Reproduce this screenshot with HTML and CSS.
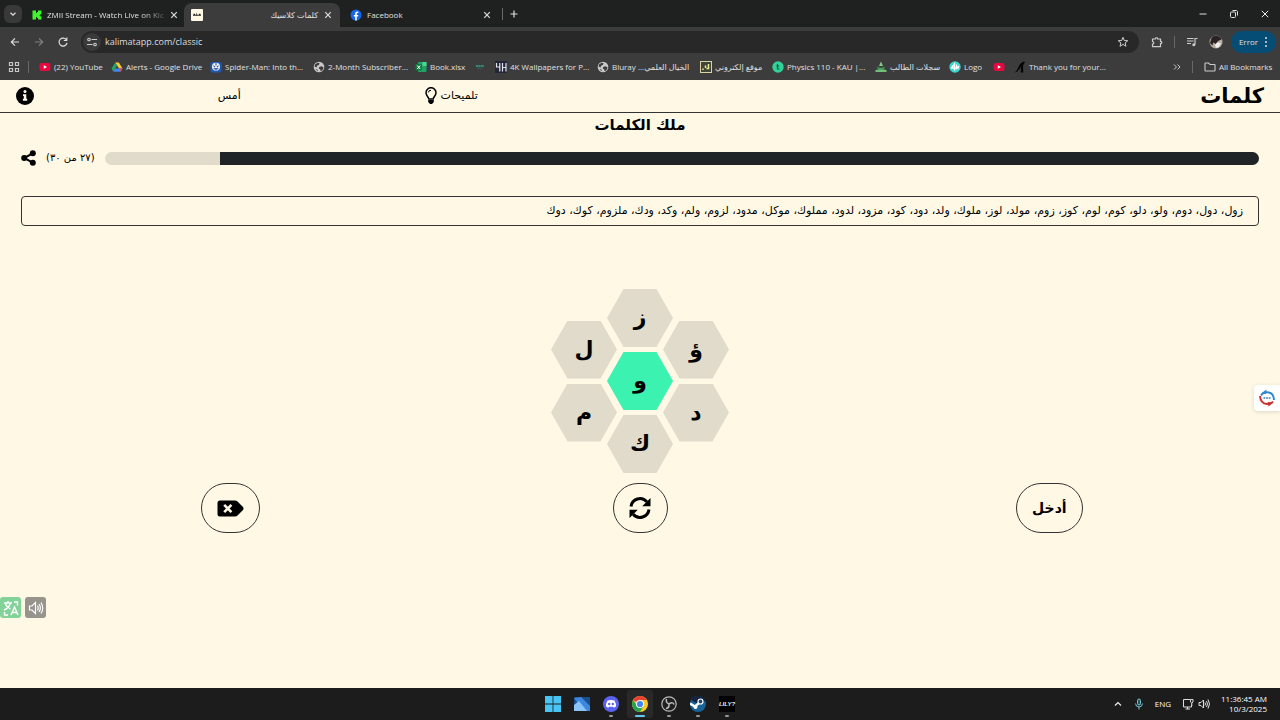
FILE: index.html
```html
<!DOCTYPE html>
<html lang="en">
<head>
<meta charset="utf-8">
<meta name="viewport" content="width=device-width, initial-scale=1">
<title>كلمات كلاسيك</title>
<link rel="stylesheet" href="styles.css">
</head>
<body>
<svg class="defs" aria-hidden="true">
  <symbol id="globe" viewBox="0 0 12 12"><circle cx="6" cy="6" r="5.3" fill="#c8c8c8"/><path d="M2 3.4 4.6 1.7 6.6 2.2 5.8 4 4 4.8 3.6 6.4 1.6 5.6ZM6.2 6 8.6 5.2 10.6 6.6 9.4 9.2 7.6 10.2 7.2 8.2 5.8 7.4ZM2.6 8 4.4 8.4 4.8 10.4" fill="#3c3c3c"/></symbol>
  <symbol id="close" viewBox="0 0 10 10"><path d="M2.200 2.200 7.800 7.800M7.800 2.200 2.200 7.800" stroke="#ddd" stroke-width="1.200"/></symbol>
  <symbol id="youtube" viewBox="0 0 12 12"><rect x=".5" y="2" width="11" height="8" rx="2" fill="#e5093f"/><path d="M4.8 4.2 8 6 4.8 7.8Z" fill="#fff"/></symbol>
</svg>
<div class="desktop">
  <header class="browser">
    <div class="tabstrip">
      <button class="tab-search" aria-label="Search tabs"><svg viewBox="0 0 18 18" width="18" height="18"><path d="M6.5 7.8 9 10.2 11.5 7.8" fill="none" stroke="#ddd" stroke-width="1.3"/></svg></button>
      <div class="tab">
        <svg viewBox="0 0 10 10" width="10" height="10"><path fill="#3ef52a" d="M.5.5H4V3H5V2H6V.5H9.5V4H8.5V5H7.500V5.500H8.500V6.500H9.500V9.500H6V8H5V7H4V9.500H.5Z"/></svg>
        <span class="tab-title faded">ZMII Stream - Watch Live on Kic</span>
        <button class="icon-btn" aria-label="Close tab"><svg width="10" height="10"><use href="#close"/></svg></button>
      </div>
      <div class="tab active">
        <svg viewBox="0 0 12 12" width="12" height="12"><rect width="12" height="12" rx="1" fill="#fff9e5"/><path d="M2 6.200H10M2.500 5.200H4M5 5H6.200M8 5.200H9.500" stroke="#222" stroke-width="1.100"/></svg>
        <span class="tab-title rtl" lang="ar">كلمات كلاسيك</span>
        <button class="icon-btn" aria-label="Close tab"><svg width="10" height="10"><use href="#close"/></svg></button>
      </div>
      <div class="tab">
        <svg viewBox="0 0 12 12" width="12" height="12"><circle cx="6" cy="6" r="5.500" fill="#1668e8"/><path d="M5.200 11.500V7.500H3.800V5.900H5.200V4.800C5.200 3.300 6 2.600 7.300 2.600L8.300 2.700V4H7.600C7 4 6.800 4.400 6.800 4.900V5.900H8.300L8 7.500H6.800V11.500Z" fill="#fff"/></svg>
        <span class="tab-title">Facebook</span>
        <button class="icon-btn" aria-label="Close tab"><svg width="10" height="10"><use href="#close"/></svg></button>
      </div>
      <span class="rule"></span>
      <button class="icon-btn new-tab" aria-label="New tab"><svg viewBox="0 0 10 10" width="10" height="10"><path d="M5 1.500V8.500M1.500 5H8.500" stroke="#ddd" stroke-width="1.200"/></svg></button>
      <div class="window-controls">
        <button class="icon-btn" aria-label="Minimize"><svg viewBox="0 0 10 10" width="10" height="10"><path d="M1.500 5H8.500" stroke="#ddd"/></svg></button>
        <button class="icon-btn" aria-label="Restore"><svg viewBox="0 0 10 10" width="10" height="10"><g fill="none" stroke="#ddd"><rect x="1.500" y="3" width="5" height="5.500" rx="1"/><path d="M3.500 1.500H7C8 1.500 8.500 2 8.500 3V6.500"/></g></svg></button>
        <button class="icon-btn" aria-label="Close"><svg viewBox="0 0 10 10" width="10" height="10"><path d="M1.800 1.800 8.200 8.200M8.200 1.800 1.800 8.200" stroke="#eee"/></svg></button>
      </div>
    </div>
    <div class="toolbar">
      <button class="icon-btn" aria-label="Back"><svg viewBox="0 0 12 12" width="12" height="12"><path d="M10 6H2.500M6 2.300 2.300 6 6 9.700" fill="none" stroke="#ddd" stroke-width="1.200"/></svg></button>
      <button class="icon-btn" aria-label="Forward"><svg viewBox="0 0 12 12" width="12" height="12"><path d="M2 6H9.500M6 2.300 9.700 6 6 9.700" fill="none" stroke="#808080" stroke-width="1.200"/></svg></button>
      <button class="icon-btn" aria-label="Reload"><svg viewBox="0 0 12 12" width="12" height="12"><path d="M9.500 4A4 4 0 1 0 10 6.800M9.800 1.500V4.500H6.800" fill="none" stroke="#ddd" stroke-width="1.200"/></svg></button>
      <div class="omnibox">
        <button class="site-info" aria-label="Site information"><svg viewBox="0 0 12 12" width="12" height="12"><g fill="none" stroke="#ccc" stroke-width="1.100"><path d="M5.500 3.500H11M1 8.500H6.500"/><circle cx="3" cy="3.500" r="1.300"/><circle cx="9" cy="8.500" r="1.300"/></g></svg></button>
        <input class="url" type="text" aria-label="Address" value="kalimatapp.com/classic">
        <button class="icon-btn" aria-label="Bookmark this page"><svg viewBox="0 0 12 12" width="12" height="12"><path d="M6 1.300 7.300 4.500 10.800 4.700 8.100 6.900 9 10.300 6 8.400 3 10.300 3.900 6.900 1.200 4.700 4.700 4.500Z" fill="none" stroke="#ccc"/></svg></button>
      </div>
      <div class="tools">
        <button class="icon-btn" aria-label="Extensions"><svg viewBox="0 0 12 12" width="12" height="12"><path d="M1.500 3H4.300C4 1.300 6.900 1.300 6.600 3H9.500V5.500C11.200 5.200 11.200 8 9.500 7.700V10.700H1.500V8C3.300 8 3.300 5.500 1.500 5.500Z" fill="none" stroke="#ccc" stroke-width="1.200"/></svg></button>
        <span class="rule"></span>
        <button class="icon-btn" aria-label="Media controls"><svg viewBox="0 0 12 12" width="12" height="12"><path d="M1 2.500H7.500M1 5H7.500M1 7.500H5M9 8.500V2.500H11.500" fill="none" stroke="#ccc" stroke-width="1.200"/><circle cx="7.800" cy="8.700" r="1.500" fill="#ccc"/></svg></button>
        <button class="icon-btn" aria-label="Profile"><svg viewBox="0 0 14 14" width="14" height="14"><circle cx="7" cy="7" r="6.500" fill="#b7aba1"/><path d="M2.500 3C5-.5 11 .5 12.800 4.200L9 6 7 9 4.200 7.500 3.500 10.500 1 8Z" fill="#282322"/><path d="M6 10 8 7.500 12 8 10 12 7 13Z" fill="#eee"/></svg></button>
      </div>
      <button class="error-btn">Error<svg viewBox="0 0 4 12" width="4" height="12" fill="#ddd"><circle cx="2" cy="2" r="1"/><circle cx="2" cy="6" r="1"/><circle cx="2" cy="10" r="1"/></svg></button>
    </div>
    <nav class="bookmarks" aria-label="Bookmarks">
      <a href="#" aria-label="Apps"><svg viewBox="0 0 12 12" width="12" height="12"><g fill="none" stroke="#c8c8c8" stroke-width="1.200"><path d="M1.500 1.500h3v3h-3ZM7.500 1.500h3v3h-3ZM1.500 7.500h3v3h-3ZM7.500 7.500h3v3h-3Z"/></g></svg></a>
      <span class="rule"></span>
      <a href="#"><svg width="12" height="12"><use href="#youtube"/></svg>(22) YouTube</a>
      <a href="#"><svg viewBox="0 0 12 12" width="12" height="12"><path d="M4.200 1.500H7.800L11.500 7.500H8Z" fill="#f9c73a"/><path d="M4.200 1.500 6 4.500 2.400 10.700 .5 7.600Z" fill="#22a565"/><path d="M4.200 7.500H11.500L9.600 10.700H2.400Z" fill="#4285f4"/><path d="M8 7.500H11.500L9.600 10.700Z" fill="#e84c3d"/></svg>Alerts - Google Drive</a>
      <a href="#"><svg viewBox="0 0 12 12" width="12" height="12"><rect x=".5" y="1" width="11" height="10.500" rx="2" fill="#1d58b7"/><circle cx="6" cy="5.700" r="4" fill="#eee"/><path d="M3 4.200 5.500 5.500 4.300 6.500ZM9 4.200 6.500 5.500 7.700 6.500Z" fill="#174a9a"/><path d="M3.500 7.800H8.500M6 2V4.500M6 7V9.500" stroke="#174a9a"/></svg>Spider-Man: Into th...</a>
      <a href="#"><svg width="12" height="12"><use href="#globe"/></svg>2-Month Subscriber...</a>
      <a href="#"><svg viewBox="0 0 12 12" width="12" height="12"><rect x="3" y="1" width="8.500" height="10" rx="1" fill="#21a366"/><path d="M7.500 1H11.500V5H7.500Z" fill="#4fd78d"/><rect x=".5" y="3" width="6.500" height="6.500" rx="1" fill="#107c41"/><path d="M2.300 4.500 5.200 8M5.200 4.500 2.300 8" stroke="#fff"/></svg>Book.xlsx</a>
      <a href="#" aria-label="Saved page"><svg viewBox="0 0 12 12" width="12" height="12"><path d="M2 5H10" stroke="#2f8c7a" stroke-width="2" stroke-dasharray="2 .4"/><path d="M3.500 7.300H7.500" stroke="#26685c"/></svg></a>
      <a href="#"><svg viewBox="0 0 12 12" width="12" height="12"><rect width="12" height="12" fill="#222638"/><path d="M1.500 2V6H5M4.800 2V10.500M7.500 2V10.500M11 2V10.500M7.500 6.500H11" fill="none" stroke="#e4e4ef" stroke-width="1.200"/></svg>4K Wallpapers for P...</a>
      <a href="#"><svg width="12" height="12"><use href="#globe"/></svg><span dir="ltr">Bluray ...الخيال العلمي</span></a>
      <a href="#"><svg viewBox="0 0 12 12" width="12" height="12"><rect x=".5" y=".5" width="11" height="11" fill="#3f4637" stroke="#d8d2a4"/><path d="M3 9V7.500M5.500 7V4.500M8.500 3V7.500H6.500" fill="none" stroke="#f1e995" stroke-width="1.500"/></svg><span lang="ar">موقع إلكتروني</span></a>
      <a href="#"><svg viewBox="0 0 12 12" width="12" height="12"><circle cx="6" cy="6" r="5.700" fill="#2fd399"/><path d="M5.500 3V8H7.500M4.300 5H7.200" fill="none" stroke="#175944" stroke-width="1.200"/></svg>Physics 110 - KAU |...</a>
      <a href="#"><svg viewBox="0 0 12 12" width="12" height="12"><path d="M6 .5 8 5H4Z" fill="#83c98d"/><path d="M2 5.500Q6 8 10 5.500L9 8.500H3Z" fill="#3c9c55"/><path d="M.5 9Q6 7.500 11.500 9V11H.5Z" fill="#71bd79"/></svg><span lang="ar">سجلات الطالب</span></a>
      <a href="#"><svg viewBox="0 0 12 12" width="12" height="12"><circle cx="6" cy="6" r="5.700" fill="#3dd7cd"/><path d="M2 7.500 5.500 3V9.500M2 7H10M7.500 3.500V7.500L10 5" fill="none" stroke="#fff" stroke-width="1.300"/></svg>Logo</a>
      <a href="#" aria-label="YouTube"><svg width="12" height="12"><use href="#youtube"/></svg></a>
      <a href="#"><svg viewBox="0 0 12 12" width="12" height="12"><path d="M.5 11.500Q3 10 4.500 6 6 1.500 10 .5L11 1 9 4.500 9.300 11.500H6.800L7 5.500Q6 8 4.500 9 3 11.500 .5 11.500Z" fill="#050505"/></svg>Thank you for your...</a>
      <button class="icon-btn more" aria-label="More bookmarks"><svg viewBox="0 0 8 8" width="8" height="8"><path d="M1 1.500 3.500 4 1 6.500M4.500 1.500 7 4 4.500 6.500" fill="none" stroke="#ccc"/></svg></button>
      <span class="rule"></span>
      <a href="#"><svg viewBox="0 0 12 12" width="12" height="12"><path d="M1 2.500Q1 2 1.500 2H4.500L6 3.500H10.500Q11 3.500 11 4V9.500Q11 10 10.500 10H1.500Q1 10 1 9.500Z" fill="none" stroke="#ccc" stroke-width="1.100"/></svg>All Bookmarks</a>
    </nav>
  </header>

  <div class="page" dir="rtl" lang="ar">
    <header class="site-header">
      <h1 class="logo">كلمات</h1>
      <nav class="site-nav">
        <button class="nav-btn">تلميحات<svg viewBox="0 0 12 18" width="12" height="18"><path d="M3.800 12C3.500 9.800 1 8.600 1 5.700A5 5 0 0 1 11 5.700C11 8.600 8.500 9.800 8.200 12Z" fill="none" stroke="#000" stroke-width="1.500"/><path d="M3.200 13H8.800V15L7 17H5L3.200 15Z"/><path d="M3.300 5.500Q3.500 3.300 6 3.300" fill="none" stroke="#000"/></svg></button>
        <button class="nav-btn">أمس</button>
        <button class="nav-btn" aria-label="معلومات"><svg viewBox="0 0 18 18" width="18" height="18"><circle cx="9" cy="9" r="9"/><circle cx="9" cy="4.600" r="1.500" fill="#fff8e5"/><path d="M7 7.200H10.300V11.800H11.200V13.700H6.900V11.800H7.800V9.100H7Z" fill="#fff8e5"/></svg></button>
      </nav>
    </header>
    <main class="game">
      <h2 class="rank">ملك الكلمات</h2>
      <div class="progress-row">
        <div class="progress" role="progressbar" aria-label="التقدم" aria-valuenow="27" aria-valuemax="30"><div class="progress-fill" style="width: 90%"></div></div>
        <span class="score">(٢٧ من ٣٠)</span>
        <button class="icon-btn" aria-label="مشاركة"><svg viewBox="0 0 15 16" width="15" height="16"><path d="M12 3.200 3.200 8 12 12.800" fill="none" stroke="#000" stroke-width="2"/><circle cx="11.800" cy="3.200" r="3"/><circle cx="3.200" cy="8" r="3"/><circle cx="11.800" cy="12.800" r="3"/></svg></button>
      </div>
      <p class="words">زول، دول، دوم، ولو، دلو، كوم، لوم، كوز، زوم، مولد، لوز، ملوك، ولد، دود، كود، مزود، لدود، مملوك، موكل، مدود، لزوم، ولم، وكد، ودك، ملزوم، كوك، دوك</p>
      <div class="hive">
        <div class="hive-col"><button class="hex">ؤ</button><button class="hex">د</button></div>
        <div class="hive-col"><button class="hex">ز</button><button class="hex center">و</button><button class="hex">ك</button></div>
        <div class="hive-col"><button class="hex">ل</button><button class="hex">م</button></div>
      </div>
      <div class="actions">
        <button class="pill">أدخل</button>
        <button class="pill" aria-label="خلط"><svg viewBox="0 0 22 22" width="22" height="22"><path d="M2 9.500A9 9 0 0 1 17.800 4.800M20 12.500A9 9 0 0 1 4.200 17.200" fill="none" stroke="#000" stroke-width="3"/><path d="M21.500 1V9.300H13.200ZM.5 21V12.700H8.800Z"/></svg></button>
        <button class="pill" aria-label="حذف"><svg viewBox="0 0 27 17" width="27" height="17"><path d="M3 .5H18Q19.500 .5 20.500 1.500L26 7Q27 8.500 26 10L20.500 15.500Q19.500 16.500 18 16.500H3Q.5 16.500 .5 14V3Q.5 .5 3 .5Z"/><path d="M7.200 4.800 14.400 12.200M14.400 4.800 7.200 12.200" stroke="#fff8e5" stroke-width="2.600"/></svg></button>
      </div>
    </main>
    <button class="side-popup" aria-label="Translate"><svg viewBox="0 0 18 18" width="18" height="18"><path d="M3 6.500Q5 3 9.500 3.200 15.500 3.500 16 11" fill="none" stroke="#3187cc" stroke-width="2"/><path d="M3 4.500 8.500 .5 8 5Z" fill="#3187cc"/><path d="M2 7Q2.500 14.500 9 15 13 15 15 12.500" fill="none" stroke="#ca3131" stroke-width="2"/><path d="M9.500 13 15.500 13.500 10.500 17.500Z" fill="#ca3131"/><path d="M5.500 9H13" stroke="#3980bd" stroke-width="1.500" stroke-dasharray="1.800 .8"/></svg></button>
    <div class="float-tools">
      <button class="float-btn" aria-label="Read aloud"><svg viewBox="0 0 16 16" width="16" height="16"><path d="M1.500 6H4L7.500 2.500V13.500L4 10H1.500Z" fill="none" stroke="#fff" stroke-width="1.200"/><path d="M9.500 5.500Q11 8 9.500 10.500M11.200 4Q13.500 8 11.200 12M13 2.500Q16.500 8 13 13.500" fill="none" stroke="#fff" stroke-width="1.200"/></svg></button>
      <button class="float-btn green" aria-label="Translate page"><svg viewBox="0 0 18 18" width="18" height="18"><path d="M2 4H10M6 2V4M8.500 4Q7 9 2 11M3.500 5Q5 8.500 8.500 10M9 16 12.500 8 16 16M10.300 13.500H14.700M12 3H15.500V6.500M2.500 13V16H6" fill="none" stroke="#fff" stroke-width="1.400"/></svg></button>
    </div>
  </div>

  <footer class="taskbar">
    <div class="task-apps">
      <button class="task" aria-label="Start"><svg viewBox="0 0 16 16" width="16" height="16"><path d="M0 0H7.600V7.600H0ZM8.400 0H16V7.600H8.400ZM0 8.400H7.600V16H0ZM8.400 8.400H16V16H8.400Z" fill="#48c5f5"/></svg></button>
      <button class="task" aria-label="Widgets"><svg viewBox="0 0 16 16" width="16" height="16"><rect y="1" width="16" height="14" rx="1" fill="#1b4f91"/><path d="M0 2 7 1 16 10V15H10Z" fill="#3c88df"/><path d="M0 15V9L5 5 13 15Z" fill="#8bc3f9"/></svg></button>
      <button class="task running" aria-label="Discord"><svg viewBox="0 0 16 16" width="16" height="16"><circle cx="8" cy="8" r="8" fill="#5b63ee"/><path d="M4.500 4.500Q8 3.500 11.500 4.500 13.300 7.500 13 10.500L10.800 11.800 10 10.800H6L5.200 11.800 3 10.500Q2.700 7.500 4.500 4.500Z" fill="#fff"/><circle cx="6.200" cy="8" r="1.200" fill="#5b63ee"/><circle cx="9.800" cy="8" r="1.200" fill="#5b63ee"/></svg></button>
      <button class="task running current" aria-label="Chrome"><svg viewBox="0 0 16 16" width="16" height="16"><circle cx="8" cy="8" r="8" fill="#f9c82b"/><path d="M8 8 1.100 4A8 8 0 0 1 14.900 4H8Z" fill="#e94234"/><path d="M1.100 4 6 11 8 16A8 8 0 0 1 1.100 4Z" fill="#28a34d"/><path d="M4.500 10 8 16 11.500 10Z" fill="#28a34d"/><circle cx="8" cy="8" r="4" fill="#fff"/><circle cx="8" cy="8" r="3.100" fill="#4285f4"/></svg></button>
      <button class="task running" aria-label="OBS"><svg viewBox="0 0 16 16" width="16" height="16"><circle cx="8" cy="8" r="7.200" fill="#202020" stroke="#bbb" stroke-width="1.200"/><path d="M8 8Q4.500 6.500 5.500 3M8 8Q12 5.500 13 8.500M8 8Q8.500 12 5 12.500" fill="none" stroke="#bbb" stroke-width="1.500"/></svg></button>
      <button class="task running" aria-label="Steam"><svg viewBox="0 0 16 16" width="16" height="16"><circle cx="8" cy="8" r="8" fill="#176398"/><path d="M1 4A8 8 0 0 1 15.500 5L8 8Z" fill="#14233f"/><path d="M0 7.500 5 10.500 9 7" fill="none" stroke="#fff" stroke-width="2.400"/><circle cx="10.500" cy="5.500" r="2.500" fill="#174972" stroke="#fff" stroke-width="1.200"/><circle cx="5.500" cy="11" r="2" fill="#fff"/></svg></button>
      <button class="task running"><span class="lily">LILY?</span></button>
    </div>
    <div class="tray">
      <button class="icon-btn" aria-label="Show hidden icons"><svg viewBox="0 0 10 10" width="10" height="10"><path d="M2 6.500 5 3.500 8 6.500" fill="none" stroke="#eee" stroke-width="1.200"/></svg></button>
      <button class="icon-btn" aria-label="Microphone"><svg viewBox="0 0 10 12" width="10" height="12"><rect x="3.500" y="1" width="3" height="6" rx="1.500" fill="#28545b" stroke="#75c4cf"/><path d="M1.500 5.500Q1.800 9 5 9T8.500 5.500M5 9V11.500" fill="none" stroke="#75c4cf"/></svg></button>
      <span>ENG</span>
      <div class="tray-pair">
        <svg viewBox="0 0 12 12" width="12" height="12"><path d="M8 1.500H1.500V9H9.500V6.500M3.500 11H8M5.500 9V11M8.500 1.500H11V4L9.800 5 8.500 4ZM9.800 5V8" fill="none" stroke="#ddd"/></svg>
        <svg viewBox="0 0 12 12" width="12" height="12"><path d="M1 4.500H3L5.500 2V10L3 7.500H1ZM7 4.500Q8 6 7 7.500M8.500 3Q10.500 6 8.500 9M10 1.500Q13 6 10 10.500" fill="none" stroke="#ddd"/></svg>
      </div>
      <time class="clock"><span>11:36:45 AM</span><span>10/3/2025</span></time>
    </div>
  </footer>
</div>
</body>
</html>
```
FILE: styles.css
```css
* { box-sizing: border-box; }
body {
  margin: 0;
  font: 8px/12px "Open Sans", "DejaVu Sans", sans-serif;
  color: #e0e0e0;
}
svg { display: block; flex: none; }
.defs { position: absolute; width: 0; height: 0; }
button { font: inherit; color: inherit; border: 0; background: none; padding: 0; }
a { color: inherit; text-decoration: none; }
.icon-btn { display: flex; align-items: center; justify-content: center; }
.desktop { display: flex; flex-direction: column; min-height: 100vh; }

.browser { background: #3c3c3c; }
.tabstrip { display: flex; align-items: center; gap: 3px; height: 27px; padding: 0 10px 0 4px; background: #1f2020; }
.tab-search { width: 18px; height: 18px; border-radius: 6px; background: #393939; }
.tab { display: flex; align-items: center; gap: 5px; width: 156px; height: 24px; padding: 0 7px; margin-top: 3px; border-radius: 8px 8px 0 0; }
.tab.active { background: #3c3c3c; }
.tab-title { flex: 1; white-space: nowrap; }
.faded { mask-image: linear-gradient(to right, #000 80%, #0004); }
.rtl { direction: rtl; }
.rule { width: 1px; height: 12px; background: #686868; }
.new-tab { margin-left: 3px; }
.window-controls { display: flex; gap: 21px; margin-left: auto; }

.toolbar { display: flex; align-items: center; height: 30px; padding: 0 4px 0 9px; gap: 12px; }
.omnibox { display: flex; flex: 1; align-items: center; height: 22px; padding: 0 10px 0 2px; border-radius: 11px; background: #282828; }
.site-info { display: flex; align-items: center; justify-content: center; width: 18px; height: 18px; border-radius: 9px; background: #3a3a3a; }
.url { flex: 1; min-width: 0; border: 0; padding: 0 4px; background: none; color: #ddd; font: 9px/16px "Open Sans", sans-serif; }
.tools { display: flex; align-items: center; gap: 11px; }
.error-btn { display: flex; align-items: center; gap: 6px; height: 22px; padding: 0 8px; margin-left: -4px; border-radius: 11px; background: #064d75; }

.bookmarks {
  display: grid;
  grid-template-columns: 20px 11px 72px 99px 103px 102px 59px 21px 102px 103px 72px 103px 74px 44px 21px 1fr 19px 12px 68px;
  align-items: center;
  height: 23px;
  padding: 0 8px 3px 8px;
}
.bookmarks a { display: flex; align-items: center; gap: 3px; white-space: nowrap; }
.more { justify-content: flex-start; }

.page {
  position: relative;
  flex: 1;
  background: #fff8e5;
  color: #000;
  font-family: "DejaVu Sans", sans-serif;
}
.site-header { display: flex; align-items: center; justify-content: space-between; height: 33px; padding: 0 16px; border-bottom: 1px solid #333; }
.logo { margin: 0; font-size: 21px; line-height: 32px; }
.site-nav { display: flex; align-items: center; justify-content: space-between; width: 37%; }
.nav-btn { display: flex; align-items: center; gap: 4px; font-size: 11px; line-height: 18px; }
.game { display: flex; flex-direction: column; padding: 0 21px; }
.rank { margin: 0; text-align: center; font-size: 15px; line-height: 24px; }
.progress-row { display: flex; align-items: center; gap: 10px; height: 16px; margin-top: 13px; }
.progress { flex: 1; height: 13px; border-radius: 7px; overflow: hidden; background: #e0dbca; }
.progress-fill { height: 100%; background: #202426; }
.score { font-size: 10px; line-height: 16px; }
.words { margin: 30px 0 0; padding: 6px 15px; border: 1px solid #333; border-radius: 4px; font-size: 11px; line-height: 16px; }
.hive { display: flex; justify-content: center; align-items: center; margin-top: 63px; }
.hive-col { display: flex; flex-direction: column; align-items: center; gap: 5px; }
.hex {
  width: 66px;
  height: 58px;
  margin: 0 -5px;
  background: #e0dbca;
  clip-path: polygon(25% 0, 75% 0, 100% 50%, 75% 100%, 25% 100%, 0 50%);
  font-size: 22px;
  font-weight: bold;
  line-height: 24px;
}
.center { background: #3bf2b0; }
.actions { display: grid; grid-template-columns: repeat(3, 1fr); justify-items: center; margin: 10px 5px 0; }
.pill { display: flex; align-items: center; justify-content: center; min-width: 55px; height: 50px; padding: 0 15px; border: 1px solid #333; border-radius: 25px; font-size: 14px; font-weight: bold; line-height: 24px; }
.side-popup { position: absolute; right: 0; top: 305px; display: flex; align-items: center; justify-content: center; width: 26px; height: 26px; border-radius: 4px 0 0 4px; background: #fff; box-shadow: 0 1px 4px #0002; }
.float-tools { position: absolute; left: 0; top: 517px; display: flex; gap: 4px; }
.float-btn { display: flex; align-items: center; justify-content: center; width: 21px; height: 21px; border-radius: 3px; background: #97938d; }
.float-btn.green { background: #83d29a; }

.taskbar { display: grid; grid-template-columns: 1fr auto 1fr; height: 32px; padding: 0 13px; background: #1c1c1c; color: #fff; }
.task-apps { grid-column: 2; display: flex; gap: 3px; align-items: center; }
.task { position: relative; display: flex; align-items: center; justify-content: center; width: 26px; height: 28px; border-radius: 3px; }
.current { background: #292929; }
.running::after { content: ""; position: absolute; left: 11px; bottom: 1px; width: 4px; height: 2px; border-radius: 1px; background: #999; }
.current::after { left: 8px; width: 10px; background: #65c8f2; }
.lily { background: #000; color: #eee; font: italic bold 6px/16px "Liberation Sans", sans-serif; }
.tray { display: flex; align-items: center; justify-content: flex-end; gap: 11px; }
.tray-pair { display: flex; gap: 4px; }
.clock { display: flex; flex-direction: column; text-align: right; line-height: 10px; }
```
